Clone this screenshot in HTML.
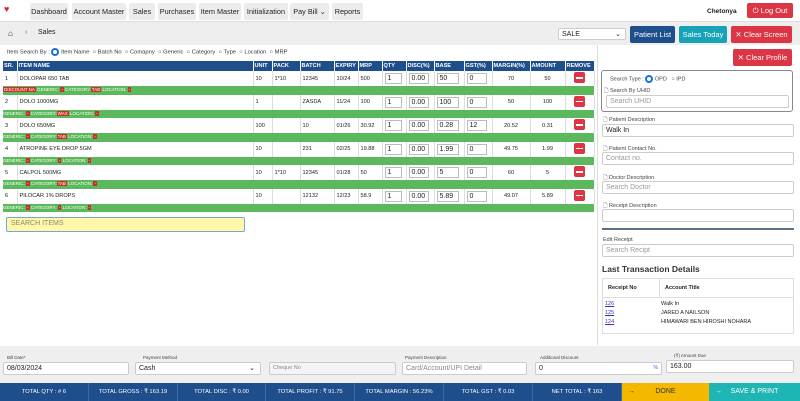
<!DOCTYPE html><html><head><meta charset="utf-8"><style>
*{box-sizing:border-box;margin:0;padding:0}
body{width:800px;height:401px;overflow:hidden;font-family:"Liberation Sans",sans-serif;background:#fff;position:relative;color:#222}
.a{position:absolute}
.nav{left:0;top:0;width:800px;height:22px;background:#fff;border-bottom:1px solid #ddd}
.nb{position:absolute;top:3px;height:17px;background:#ececec;font-size:7.3px;line-height:17px;text-align:center;color:#222;border-radius:2px}
.bc{left:0;top:22px;width:800px;height:23px;background:#eeeeee}
.btn{position:absolute;color:#fff;font-size:7.5px;text-align:center;border-radius:2px}
table{border-collapse:collapse;table-layout:fixed;font-size:5.6px}
th{background:#1f4e8c;color:#fff;text-align:left;height:10px;padding:0 1px;border-right:1px solid #fff;font-weight:bold}
td{height:15px;padding:0 2px;border-right:1px solid #ddd}
tr.s td{height:8.5px;background:#5cb85c;color:#fff;padding:0;font-size:4.5px;border:none;line-height:8px}
.in{display:inline-block;width:90%;height:11px;border:1px solid #bbb;font-size:7px;line-height:9px;padding-left:2px;background:#fff}
.rm{display:inline-block;width:11px;height:11px;background:#dc3545;border-radius:2px;position:relative}
.rm:after{content:"";position:absolute;left:2px;top:5px;width:7px;height:1.5px;background:#fff}
.r{background:#c9302c;padding:0 1px}
.lbl{font-size:5.5px;color:#444}
.fi{position:absolute;border:1px solid #ccc;font-size:7px;height:13px;line-height:11px;padding-left:3px;background:#fff;border-radius:2px}
.ft{position:absolute;top:383px;height:18px;font-size:5.8px;color:#fff;line-height:18px;text-align:center;background:#1f4e8c;border-right:1px solid #3a6aa8;white-space:nowrap;overflow:hidden}
</style></head><body>
<div class="a nav"></div>
<div class="a" style="left:4px;top:5px;width:14px;height:9px;color:#d22;font-size:9px;line-height:9px">♥</div>
<div class="nb" style="left:30px;width:38px">Dashboard</div>
<div class="nb" style="left:72px;width:54px">Account Master</div>
<div class="nb" style="left:129px;width:26px">Sales</div>
<div class="nb" style="left:158px;width:38px">Purchases</div>
<div class="nb" style="left:199px;width:42px">Item Master</div>
<div class="nb" style="left:244px;width:44px">Initialization</div>
<div class="nb" style="left:290px;width:39px">Pay Bill ⌄</div>
<div class="nb" style="left:332px;width:31px">Reports</div>
<div class="a" style="left:707px;top:8px;font-size:6.5px;font-weight:bold">Chetonya</div>
<div class="btn" style="left:747px;top:3px;width:46px;height:15px;line-height:15px;background:#dc3545">⏻ Log Out</div>
<div class="a bc"></div>
<div class="a" style="left:8px;top:29px;font-size:8px">⌂</div>
<div class="a" style="left:25px;top:29px;font-size:7px;color:#666">›</div>
<div class="a" style="left:38px;top:29px;font-size:7px">Sales</div>
<div class="fi" style="left:558px;top:28px;width:68px;height:12px">SALE<span style="float:right;padding-right:4px">⌄</span></div>
<div class="btn" style="left:630px;top:26px;width:45px;height:17px;line-height:17px;background:#1f4e8c">Patient List</div>
<div class="btn" style="left:679px;top:26px;width:48px;height:17px;line-height:17px;background:#17a2b8">Sales Today</div>
<div class="btn" style="left:731px;top:26px;width:61px;height:17px;line-height:17px;background:#dc3545">✕ Clear Screen</div>
<div class="btn" style="left:733px;top:49px;width:59px;height:17px;line-height:17px;background:#dc3545">✕ Clear Profile</div>
<div class="a" style="left:597px;top:45px;width:1px;height:300px;background:#ddd"></div>
<div class="a" style="left:7px;top:48px;font-size:5.8px;color:#333">Item Search By : <span style="display:inline-block;width:8px;height:8px;border:2px solid #1a6fe0;border-radius:50%;vertical-align:middle"></span> Item Name &nbsp;○ Batch No &nbsp;○ Comapny &nbsp;○ Generic &nbsp;○ Category &nbsp;○ Type &nbsp;○ Location &nbsp;○ MRP</div>
<table class="a" style="left:3px;top:61px;width:591px">
<colgroup><col style="width:14px"><col style="width:236px"><col style="width:19px"><col style="width:28px"><col style="width:34px"><col style="width:24px"><col style="width:24px"><col style="width:24px"><col style="width:28px"><col style="width:30px"><col style="width:28px"><col style="width:38px"><col style="width:35px"><col style="width:29px"></colgroup>
<tr><th>SR.</th><th>ITEM NAME</th><th>UNIT</th><th>PACK</th><th>BATCH</th><th>EXPIRY</th><th>MRP</th><th>QTY</th><th>DISC(%)</th><th>BASE</th><th>GST(%)</th><th>MARGIN(%)</th><th>AMOUNT</th><th>REMOVE</th></tr>
<tr><td>1</td><td>DOLOPAR 650 TAB</td><td>10</td><td>1*10</td><td>12345</td><td>10/24</td><td>500</td><td><span class="in">1</span></td><td><span class="in">0.00</span></td><td><span class="in">50</span></td><td><span class="in">0</span></td><td style="text-align:center">70</td><td style="text-align:center">50</td><td style="text-align:center"><span class="rm"></span></td></tr>
<tr class="s"><td colspan="14"><span class="r">DISCOUNT NA</span> GENERIC: <span class="r">-</span> CATEGORY:<span class="r">TAB</span> LOCATION: <span class="r">-</span></td></tr>
<tr><td>2</td><td>DOLO 1000MG</td><td>1</td><td></td><td>ZASDA</td><td>11/24</td><td>100</td><td><span class="in">1</span></td><td><span class="in">0.00</span></td><td><span class="in">100</span></td><td><span class="in">0</span></td><td style="text-align:center">50</td><td style="text-align:center">100</td><td style="text-align:center"><span class="rm"></span></td></tr>
<tr class="s"><td colspan="14">GENERIC: <span class="r">-</span> CATEGORY:<span class="r">WAX</span> LOCATION: <span class="r">-</span></td></tr>
<tr><td>3</td><td>DOLO 650MG</td><td>100</td><td></td><td>10</td><td>01/26</td><td>30.92</td><td><span class="in">1</span></td><td><span class="in">0.00</span></td><td><span class="in">0.28</span></td><td><span class="in">12</span></td><td style="text-align:center">20.52</td><td style="text-align:center">0.31</td><td style="text-align:center"><span class="rm"></span></td></tr>
<tr class="s"><td colspan="14">GENERIC: <span class="r">-</span> CATEGORY:<span class="r">TAB</span> LOCATION: <span class="r">-</span></td></tr>
<tr><td>4</td><td>ATROPINE EYE DROP 5GM</td><td>10</td><td></td><td>231</td><td>02/25</td><td>19.88</td><td><span class="in">1</span></td><td><span class="in">0.00</span></td><td><span class="in">1.99</span></td><td><span class="in">0</span></td><td style="text-align:center">49.75</td><td style="text-align:center">1.99</td><td style="text-align:center"><span class="rm"></span></td></tr>
<tr class="s"><td colspan="14">GENERIC: <span class="r">-</span> CATEGORY: <span class="r">-</span> LOCATION: <span class="r">-</span></td></tr>
<tr><td>5</td><td>CALPOL 500MG</td><td>10</td><td>1*10</td><td>12345</td><td>01/28</td><td>50</td><td><span class="in">1</span></td><td><span class="in">0.00</span></td><td><span class="in">5</span></td><td><span class="in">0</span></td><td style="text-align:center">60</td><td style="text-align:center">5</td><td style="text-align:center"><span class="rm"></span></td></tr>
<tr class="s"><td colspan="14">GENERIC: <span class="r">-</span> CATEGORY:<span class="r">TAB</span> LOCATION: <span class="r">-</span></td></tr>
<tr><td>6</td><td>PILOCAR 1% DROPS</td><td>10</td><td></td><td>12132</td><td>12/23</td><td>58.9</td><td><span class="in">1</span></td><td><span class="in">0.00</span></td><td><span class="in">5.89</span></td><td><span class="in">0</span></td><td style="text-align:center">49.07</td><td style="text-align:center">5.89</td><td style="text-align:center"><span class="rm"></span></td></tr>
<tr class="s"><td colspan="14">GENERIC: <span class="r">-</span> CATEGORY: <span class="r">-</span> LOCATION: <span class="r">-</span></td></tr>
</table>
<div class="a" style="left:6px;top:217px;width:239px;height:15px;background:#fff8a8;border:1.5px solid #6fa8dc;border-radius:2px;font-size:7px;line-height:12px;padding-left:4px;color:#887">SEARCH ITEMS</div>
<div class="a" style="left:601px;top:70px;width:192px;height:42px;border:1px solid #888;border-radius:3px"></div>
<div class="a lbl" style="left:610px;top:75px">Search Type : <span style="display:inline-block;width:8px;height:8px;border:2px solid #1a6fe0;border-radius:50%;vertical-align:middle"></span> OPD &nbsp; ○ IPD</div>
<div class="a lbl" style="left:604px;top:87px">🗋 Search By UHID</div>
<div class="fi" style="left:606px;top:95px;width:183px;color:#999">Search UHID</div>
<div class="a lbl" style="left:603px;top:116px">🗋 Patient Description</div>
<div class="fi" style="left:602px;top:124px;width:192px">Walk In</div>
<div class="a lbl" style="left:603px;top:145px">🗋 Patient Contact No.</div>
<div class="fi" style="left:602px;top:152px;width:192px;color:#999">Contact no.</div>
<div class="a lbl" style="left:603px;top:174px">🗋 Doctor Description</div>
<div class="fi" style="left:602px;top:181px;width:192px;color:#999">Search Doctor</div>
<div class="a lbl" style="left:603px;top:202px">🗋 Receipt Description</div>
<div class="fi" style="left:602px;top:209px;width:192px"></div>
<div class="a" style="left:602px;top:228px;width:192px;height:2px;background:#5a7085"></div>
<div class="a lbl" style="left:603px;top:237px">Edit Receipt</div>
<div class="fi" style="left:602px;top:244px;width:192px;color:#999">Search Recipt</div>
<div class="a" style="left:602px;top:264px;font-size:8.5px;font-weight:bold;color:#333">Last Transaction Details</div>
<div class="a" style="left:602px;top:278px;width:192px;height:56px;border:1px solid #ddd;font-size:5.5px">
<div style="height:19px;border-bottom:1px solid #ddd;font-weight:bold;position:relative"><span class="a" style="left:5px;top:6px">Receipt No</span><span class="a" style="left:62px;top:6px">Account Title</span></div>
<div class="a" style="left:56px;top:0;width:1px;height:19px;background:#ddd"></div>
<div style="position:relative;height:12px"><span class="a" style="left:2px;top:3px;color:#33c;text-decoration:underline">126</span><span class="a" style="left:58px;top:3px">Walk In</span></div>
<div style="position:relative;height:12px"><span class="a" style="left:2px;top:0;color:#33c;text-decoration:underline">125</span><span class="a" style="left:58px;top:0">JARED A NAILSON</span></div>
<div style="position:relative;height:12px"><span class="a" style="left:2px;top:-3px;color:#33c;text-decoration:underline">124</span><span class="a" style="left:58px;top:-3px">HIMAWARI BEN HIROSHI NOHARA</span></div>
</div>
<div class="a" style="left:0;top:346px;width:800px;height:37px;background:#efefef"></div>
<div class="a lbl" style="left:7px;top:355px;font-size:4.5px">Bill Date*</div>
<div class="fi" style="left:3px;top:362px;width:126px">08/03/2024</div>
<div class="a lbl" style="left:143px;top:355px;font-size:4.5px">Payment Method</div>
<div class="fi" style="left:135px;top:362px;width:126px">Cash<span style="float:right;padding-right:5px">⌄</span></div>
<div class="fi" style="left:269px;top:362px;width:127px;background:#f4f4f4;color:#888;font-size:5.5px">Cheque No</div>
<div class="a lbl" style="left:405px;top:355px;font-size:4.5px">Payment Description</div>
<div class="fi" style="left:402px;top:362px;width:125px;color:#888">Card/Account/UPI Detail</div>
<div class="a lbl" style="left:540px;top:355px;font-size:4.5px">Additional Discount</div>
<div class="fi" style="left:535px;top:362px;width:127px">0<span style="float:right;padding-right:3px;color:#1a6fe0;font-size:5px">%</span></div>
<div class="a lbl" style="left:674px;top:353px;font-size:4.5px">(₹) Amount Due</div>
<div class="fi" style="left:666px;top:360px;width:128px">163.00</div>
<div class="ft" style="left:0;width:89px">TOTAL QTY : # 6</div>
<div class="ft" style="left:89px;width:89px">TOTAL GROSS : ₹ 163.19</div>
<div class="ft" style="left:178px;width:88px">TOTAL DISC : ₹ 0.00</div>
<div class="ft" style="left:266px;width:89px">TOTAL PROFIT : ₹ 91.75</div>
<div class="ft" style="left:355px;width:89px">TOTAL MARGIN : 56.23%</div>
<div class="ft" style="left:444px;width:89px">TOTAL GST : ₹ 0.03</div>
<div class="ft" style="left:533px;width:89px">NET TOTAL : ₹ 163</div>
<div class="ft" style="left:622px;width:87px;background:#f5b800;font-size:7px;border:none;color:#333"><span style="position:absolute;left:6px">→</span>DONE</div>
<div class="ft" style="left:709px;width:91px;background:#1fb5b5;font-size:7px;border:none"><span style="position:absolute;left:6px">→</span>SAVE &amp; PRINT</div>
</body></html>
